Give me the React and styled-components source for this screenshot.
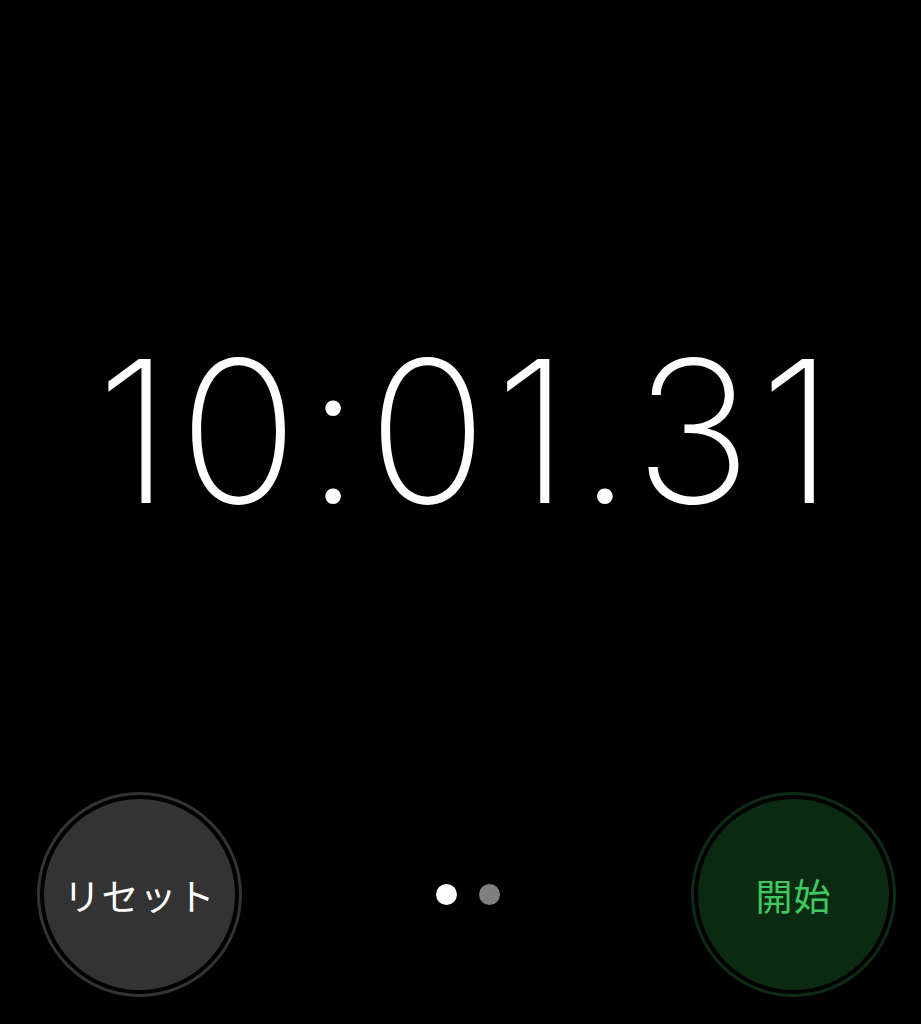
import React from 'react';
import styled, { createGlobalStyle } from 'styled-components';

//------------- Styling -------------//

const GlobalStyle = createGlobalStyle`
  html, body {
    margin: 0;
    padding: 0;
    background: #000;
  }
  body {
    font-family: Inter, "Noto Sans CJK JP", sans-serif;
  }
`;

const Screen = styled.div`
  width: 921px;
  height: 1024px;
  background: #000;
  display: flex;
  flex-direction: column;
  overflow: hidden;
`;

const TimerArea = styled.div`
  padding-top: 332px;
  padding-left: 17px;
  display: flex;
  justify-content: center;
`;

const Time = styled.div`
  color: #fff;
  font-family: Inter, "Liberation Sans", sans-serif;
  font-weight: 200;
  font-size: 198px;
  line-height: 1;
  letter-spacing: 7.4px;
`;

const Controls = styled.div`
  margin-top: auto;
  padding: 0 25px 27px 37px;
  display: flex;
  align-items: center;
  justify-content: space-between;
`;

const Ring = styled.div`
  width: 191px;
  height: 191px;
  border-radius: 50%;
  border: 3px solid ${p => p.ring};
  padding: 4px;
  box-sizing: content-box;
`;

const RoundButton = styled.button`
  width: 100%;
  height: 100%;
  border-radius: 50%;
  border: none;
  background: ${p => p.fill};
  color: ${p => p.text};
  font-family: "Noto Sans CJK JP", sans-serif;
  font-size: 37px;
  font-weight: 400;
  letter-spacing: 1px;
  display: flex;
  align-items: center;
  justify-content: center;
  padding: 0;
  cursor: pointer;
`;

const Pager = styled.div`
  display: flex;
  gap: 22px;
  margin-left: 2px;
`;

const Dot = styled.span`
  width: 21px;
  height: 21px;
  border-radius: 50%;
  background: ${p => (p.active ? '#fff' : '#7f7f7f')};
`;

//------------- Component -------------//

export default function App() {
  return (
    <>
      <GlobalStyle />
      <Screen>
        <TimerArea>
          <Time>10:01.31</Time>
        </TimerArea>
        <Controls>
          <Ring ring="#333333">
            <RoundButton fill="#333333" text="#ffffff">リセット</RoundButton>
          </Ring>
          <Pager>
            <Dot active />
            <Dot />
          </Pager>
          <Ring ring="#0e2c15">
            <RoundButton fill="#0b2a12" text="#3fc95e">開始</RoundButton>
          </Ring>
        </Controls>
      </Screen>
    </>
  );
}
